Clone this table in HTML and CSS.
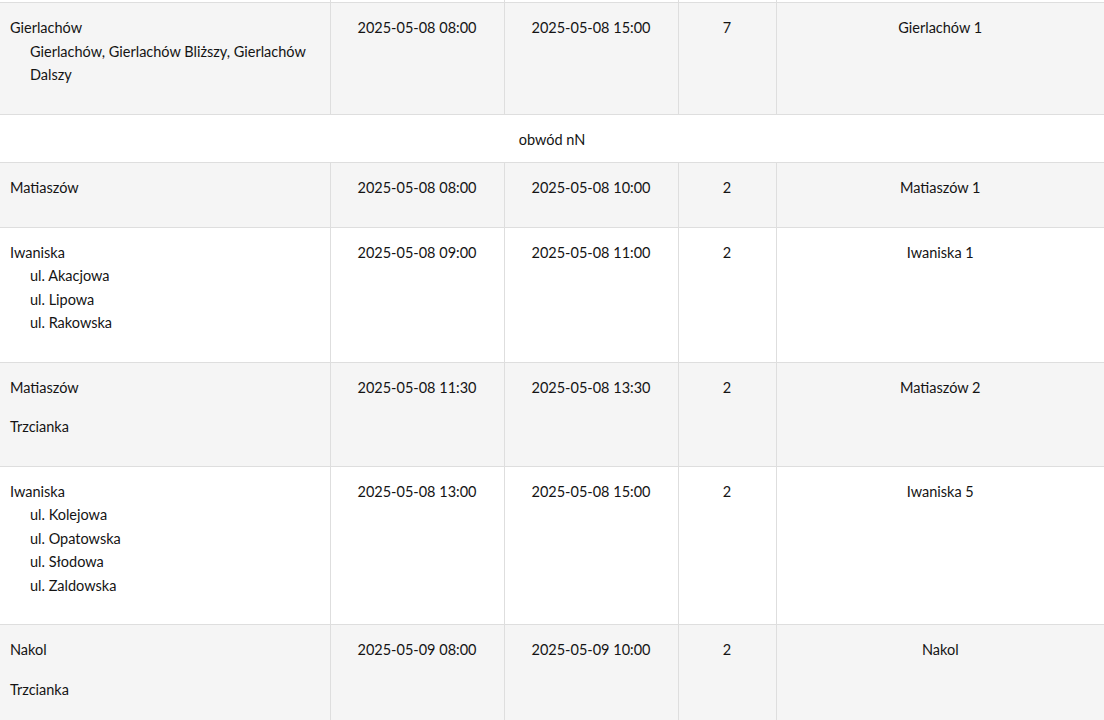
FILE: index.html
```html
<!DOCTYPE html>
<html lang="pl">
<head>
<meta charset="utf-8">
<title>Wyłączenia</title>
<link rel="stylesheet" href="styles.css">
</head>
<body>
<table class="schedule">
  <colgroup>
    <col class="c-place">
    <col class="c-date">
    <col class="c-date">
    <col class="c-num">
    <col class="c-station">
  </colgroup>
  <tbody>
    <tr class="stub"><td></td><td></td><td></td><td></td><td></td></tr>
    <tr class="shade">
      <td class="place">
        <div class="loc">Gierlachów
          <ul><li>Gierlachów, Gierlachów Bliższy, Gierlachów Dalszy</li></ul>
        </div>
      </td>
      <td>2025-05-08 08:00</td>
      <td>2025-05-08 15:00</td>
      <td>7</td>
      <td>Gierlachów 1</td>
    </tr>
    <tr class="group"><td colspan="5">obwód nN</td></tr>
    <tr class="shade">
      <td class="place"><div class="loc">Matiaszów</div></td>
      <td>2025-05-08 08:00</td>
      <td>2025-05-08 10:00</td>
      <td>2</td>
      <td>Matiaszów 1</td>
    </tr>
    <tr>
      <td class="place">
        <div class="loc">Iwaniska
          <ul><li>ul. Akacjowa</li><li>ul. Lipowa</li><li>ul. Rakowska</li></ul>
        </div>
      </td>
      <td>2025-05-08 09:00</td>
      <td>2025-05-08 11:00</td>
      <td>2</td>
      <td>Iwaniska 1</td>
    </tr>
    <tr class="shade">
      <td class="place"><div class="loc">Matiaszów</div><div class="loc">Trzcianka</div></td>
      <td>2025-05-08 11:30</td>
      <td>2025-05-08 13:30</td>
      <td>2</td>
      <td>Matiaszów 2</td>
    </tr>
    <tr>
      <td class="place">
        <div class="loc">Iwaniska
          <ul><li>ul. Kolejowa</li><li>ul. Opatowska</li><li>ul. Słodowa</li><li>ul. Zaldowska</li></ul>
        </div>
      </td>
      <td>2025-05-08 13:00</td>
      <td>2025-05-08 15:00</td>
      <td>2</td>
      <td>Iwaniska 5</td>
    </tr>
    <tr class="shade">
      <td class="place"><div class="loc">Nakol</div><div class="loc">Trzcianka</div></td>
      <td>2025-05-09 08:00</td>
      <td>2025-05-09 10:00</td>
      <td>2</td>
      <td>Nakol</td>
    </tr>
  </tbody>
</table>
</body>
</html>
```
FILE: styles.css
```css
html, body {
  margin: 0;
  padding: 0;
  background: #ffffff;
}
body {
  font-family: Lato, "Open Sans", "Liberation Sans", sans-serif;
  font-size: 14.5px;
  line-height: 23.5px;
  color: #141414;
}
.schedule {
  width: 1104px;
  table-layout: fixed;
  border-collapse: collapse;
}
.c-place { width: 330px; }
.c-date { width: 174px; }
.c-num { width: 98px; }
.c-station { width: 328px; }
.schedule td {
  border: 1px solid #dedede;
  padding: 13px 10px 11px;
  vertical-align: top;
  text-align: center;
}
.schedule td:first-child {
  border-left: none;
}
.schedule td:last-child {
  border-right: none;
}
.schedule td.place {
  text-align: left;
}
.schedule tr.stub td {
  height: 2px;
  padding: 0;
  border-top: none;
}
.schedule tr.shade td {
  background: #f5f5f5;
}
.schedule tr.group td {
  background: #ffffff;
  text-align: center;
}
.loc {
  margin: 0 0 16px 0;
}
.loc ul {
  list-style: none;
  margin: 0;
  padding: 0 0 0 20px;
}
.loc li {
  margin: 0;
}
```
